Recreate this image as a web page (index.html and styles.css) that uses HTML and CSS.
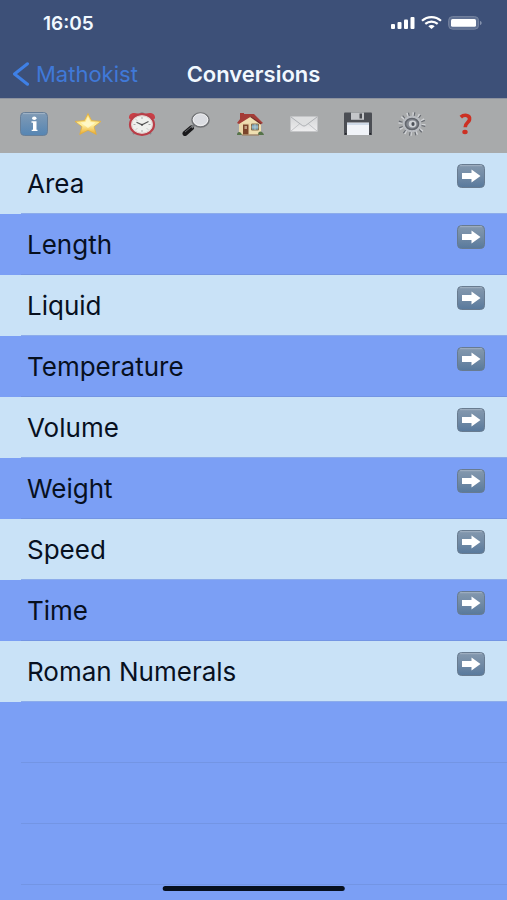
FILE: index.html
```html
<!DOCTYPE html>
<html lang="en">
<head>
<meta charset="utf-8">
<meta name="viewport" content="width=device-width, initial-scale=1">
<title>Conversions</title>
<link rel="stylesheet" href="styles.css">
</head>
<body>
<svg class="defs" width="0" height="0" aria-hidden="true">
  <defs>
    <linearGradient id="tile" x1="0" y1="0" x2="0" y2="1"><stop offset="0" stop-color="#8599ae"/><stop offset=".5" stop-color="#728ba6"/><stop offset="1" stop-color="#58799c"/></linearGradient>
    <linearGradient id="tileBlue" x1="0" y1="0" x2="0" y2="1"><stop offset="0" stop-color="#819bb5"/><stop offset="1" stop-color="#5585b3"/></linearGradient>
    <linearGradient id="gold" x1="0" y1="0" x2="0" y2="1"><stop offset="0" stop-color="#f6cf58"/><stop offset=".55" stop-color="#fff0a0"/><stop offset="1" stop-color="#e9a628"/></linearGradient>
    <linearGradient id="paper" x1="0" y1="0" x2="0" y2="1"><stop offset="0" stop-color="#d4d5d7"/><stop offset="1" stop-color="#eeeeef"/></linearGradient>
    <symbol id="arrow" viewBox="0 0 28 24">
      <rect x=".5" y=".5" width="27" height="23" rx="4" fill="url(#tile)" stroke="#687b90"/>
      <path d="M3 1.700h22" stroke="#a9b8c7" stroke-width=".8"/>
      <path d="M5 9h9.500V5.400L23.500 12l-9 6.600V15H5z" fill="#fff"/>
    </symbol>
  </defs>
</svg>
<header class="header">
  <div class="status">
    <span>16:05</span>
    <svg class="status-icons" viewBox="0 0 91 14" fill="#fff" role="img" aria-label="Signal, Wi-Fi, battery">
      <rect x="0" y="8" width="4" height="5" rx="1"/><rect x="6.500" y="6" width="4" height="7" rx="1"/><rect x="13" y="3.500" width="4" height="9.500" rx="1"/><rect x="19.500" y="1" width="4" height="12" rx="1"/>
      <g fill="none" stroke="#fff" stroke-width="2.200"><path d="M31 4.800c5.500-4.900 13.500-4.900 19 0"/><path d="M34.300 7.900c3.600-3 8.800-3 12.400 0"/></g>
      <path d="M37.300 10.200c1.900-1.500 4.500-1.500 6.400 0L40.500 13z"/>
      <rect x="57.600" y=".6" width="30" height="12.600" rx="4" fill="#5f7092" stroke="#75839f"/><rect x="60" y="3" width="25" height="7.800" rx="1.500"/><path d="M89 5c2.200.6 2.200 3.400 0 4z" fill="#8592ae"/>
    </svg>
  </div>
  <div class="navbar">
    <a class="back" href="#"><svg viewBox="0 0 18 24" aria-hidden="true"><path d="M15.500 1.800 2.500 12l13 10.200" fill="none" stroke="#3f80e6" stroke-width="3" stroke-linecap="round" stroke-linejoin="round"/></svg>Mathokist</a>
    <h1>Conversions</h1>
  </div>
</header>
<nav class="toolbar" aria-label="Tools">
  <button aria-label="Information"><svg viewBox="0 0 28 24"><rect x=".5" y=".5" width="27" height="23" rx="4" fill="url(#tileBlue)" stroke="#687f98"/><path d="M3 1.600h22" stroke="#a9bccd" stroke-width=".8"/><ellipse cx="14.300" cy="6.300" rx="2.200" ry="1.800" fill="#fff"/><path d="M11.500 9.300h5v8.500h1v1.200h-5.800v-1.200h1.300v-7.100h-1.500z" fill="#fff"/></svg></button>
  <button aria-label="Favourites"><svg viewBox="0 0 28 24"><path d="m14 1.500 3.600 7.100 9.400.8-7 5.300 2.300 7.800-8.300-4.300-8.300 4.300L8 14.700 1 9.400l9.400-.8z" fill="url(#gold)" stroke="#e2ae3d" stroke-width=".8" stroke-linejoin="round"/><path d="m14 4 2.600 6 5 .6-5 3.300-2.600 2-2.600-2-5-3.300 5-.6z" fill="#fffbd5" opacity=".75"/></svg></button>
  <button aria-label="Alarm"><svg viewBox="0 0 28 24"><path d="m5 22 3-3m15 3-3-3" stroke="#86898c" stroke-width="2"/><path d="M1 6.500C.5 1 6 0 10 1.800L3 7.200zM27 6.500C27.500 1 22 0 18 1.800l7 5.400z" fill="#c93f46"/><path d="M12.500.5h3v2h-3z" fill="#747678"/><ellipse cx="14" cy="12.500" rx="12" ry="10.300" fill="#eff0ed" stroke="#b93e48" stroke-width="2.200"/><ellipse cx="14" cy="12.500" rx="10.300" ry="8.600" fill="none" stroke="#d9c5c2" stroke-width=".7"/><path d="M14 5v2m0 11v2M5.500 12.500h2m13 0h2M8 7.500l1 1m10 8 1 1M8 17.500l1-1" stroke="#999" stroke-width=".8"/><path d="m8.500 10.200 5.500 2.600 6.500-3.300" fill="none" stroke="#555" stroke-width="1.100"/><circle cx="14" cy="12.700" r="1" fill="#444"/></svg></button>
  <button aria-label="Search"><svg viewBox="0 0 28 24"><path d="m3 21.500 6.500-5.600" stroke="#19191b" stroke-width="5" stroke-linecap="round"/><path d="m3 20 6-5" stroke="#65666a" stroke-width="1"/><path d="m9.500 15.500 3-2.700" stroke="#77797c" stroke-width="2.500"/><ellipse cx="18.500" cy="8" rx="8.500" ry="7" fill="#dedfe3" stroke="#717376" stroke-width="1.500"/><ellipse cx="18.500" cy="7.600" rx="7.300" ry="5.800" fill="#dadce1" stroke="#f0f0f1" stroke-width="1"/></svg></button>
  <button aria-label="Home"><svg viewBox="0 0 28 24"><path d="M4 1h4v7H4z" fill="#a53b36"/><path d="M3 10 14 3l11 7v12.500H3z" fill="#efdfb1"/><path d="M3 11h11v11.500H3z" fill="#ead7a8"/><path d="M8 2h10l9 9-2 1-10-7.500L3 12l-2-1z" fill="#a43d38"/><path d="M14.500 4.500 25 12" stroke="#702c2a" stroke-width="1.200"/><path d="M7 12.500h5.500v10H7z" fill="#7b452b"/><path d="M8.500 14h2.500v3H8.500z" fill="#c3a183"/><path d="M15.500 12h7v6h-7z" fill="#7da5b7" stroke="#8a704d"/><path d="M19 12v6M15.500 15h7" stroke="#c4d6da" stroke-width=".7"/><path d="M1 23c0-4 4-4 5 0zm21 0c0-5 5-4 6 0z" fill="#557349"/><path d="M6 23h17" stroke="#9c7755"/></svg></button>
  <button aria-label="Mail"><svg viewBox="0 0 28 24"><rect x=".5" y="4.500" width="27" height="15" rx=".7" fill="url(#paper)" stroke="#c4c5c7"/><path d="m1 19 9-7.500M27 19l-9-7.500" stroke="#c2c4c7"/><path d="m1 5 11.300 8.500q1.700 1.200 3.400 0L27 5" fill="#dedfe0" stroke="#adb0b4"/></svg></button>
  <button aria-label="Save"><svg viewBox="0 0 28 24"><path d="M1 .5h26q1 0 1 1V23H0V1.500q0-1 1-1z" fill="#4b4e54"/><path d="M7 .5h13v7.300H7z" fill="#c4c6c9"/><path d="M15.500 1.500H18v5h-2.500z" fill="#484a4f"/><path d="M3 10.500h22V23H3z" fill="#f0f3f8"/><path d="M3 11h22v2H3z" fill="#cfdae8"/><path d="M1 21h1.500v1.500H1zm24.500 0H27v1.500h-1.500z" fill="#222429"/></svg></button>
  <button aria-label="Settings"><svg viewBox="0 0 28 24"><ellipse cx="14" cy="12" rx="11.600" ry="9.900" fill="none" stroke="#d0d2d5" stroke-width="3.800" stroke-dasharray="1.700 3.950"/><ellipse cx="14" cy="12" rx="11.600" ry="9.900" fill="none" stroke="#666a71" stroke-width="3.800" stroke-dasharray="1.100 4.550" stroke-dashoffset="-1.500"/><ellipse cx="14" cy="12" rx="8.300" ry="7.200" fill="#777b82" stroke="#b9bcc1" stroke-width="2.200"/><ellipse cx="14" cy="12" rx="6.500" ry="5.500" fill="#858991" stroke="#63676e" stroke-width="1.500"/><ellipse cx="14.500" cy="12" rx="3.800" ry="3.400" fill="#d0d3d7"/><ellipse cx="15" cy="12" rx="1.600" ry="1.900" fill="#4b5058"/></svg></button>
  <button aria-label="Help"><svg viewBox="0 0 28 24"><path d="M8.800 5.200C12 2.300 18.300 2.500 17.500 7.600c-.5 3-4.200 3.300-4.300 7.600" fill="none" stroke="#cc3023" stroke-width="3.600"/><ellipse cx="13" cy="20" rx="2.700" ry="2.200" fill="#cc3023"/></svg></button>
</nav>
<main class="content">
  <ul class="list">
    <li><a href="#">Area<svg><use href="#arrow"/></svg></a></li>
    <li><a href="#">Length<svg><use href="#arrow"/></svg></a></li>
    <li><a href="#">Liquid<svg><use href="#arrow"/></svg></a></li>
    <li><a href="#">Temperature<svg><use href="#arrow"/></svg></a></li>
    <li><a href="#">Volume<svg><use href="#arrow"/></svg></a></li>
    <li><a href="#">Weight<svg><use href="#arrow"/></svg></a></li>
    <li><a href="#">Speed<svg><use href="#arrow"/></svg></a></li>
    <li><a href="#">Time<svg><use href="#arrow"/></svg></a></li>
    <li><a href="#">Roman Numerals<svg><use href="#arrow"/></svg></a></li>
  </ul>
  <div class="blank"></div>
  <div class="blank"></div>
  <div class="blank"></div>
</main>
<div class="home-indicator"></div>
</body>
</html>
```
FILE: styles.css
```css
* { box-sizing: border-box; }

body {
  margin: 0;
  min-height: 100vh;
  overflow-x: hidden;
  background: #7b9ff5;
  color: #07101f;
  font-family: Inter, "Liberation Sans", sans-serif;
}

svg { display: block; }
a { color: inherit; text-decoration: none; }
.defs { position: absolute; }

.header {
  background: #3d5078;
  color: #f1f8ff;
}

.status {
  display: flex;
  justify-content: space-between;
  align-items: center;
  height: 46px;
  padding: 0 25px 0 43px;
  font-size: 19px;
  font-weight: 600;
}

.status-icons {
  width: 91px;
  height: 14px;
}

.navbar {
  display: grid;
  grid-template-columns: 1fr auto 1fr;
  align-items: center;
  height: 52px;
  padding: 4px 12px 0;
  line-height: 24px;
}

.back {
  display: flex;
  align-items: center;
  gap: 6px;
  color: #4079d8;
  font-size: 22px;
}

.back svg {
  width: 18px;
  height: 24px;
}

h1 {
  margin: 0;
  font-size: 22px;
  font-weight: 600;
}

.toolbar {
  display: flex;
  height: 55px;
  padding: 0 14px 0 7px;
  background: #a8aaab;
  border-top: 1px solid #8e939f;
}

.toolbar button {
  display: flex;
  flex: 1;
  align-items: center;
  justify-content: center;
  padding: 0 0 4px;
  border: 0;
  background: none;
}

.toolbar svg {
  width: 28px;
  height: 24px;
}

.list {
  margin: 0;
  padding: 0;
  list-style: none;
}

.list a {
  display: flex;
  justify-content: space-between;
  height: 61px;
  padding: 0 22px 0 27px;
  font-size: 26px;
  line-height: 62px;
}

.list li,
.blank {
  background-image: linear-gradient(#7395e4, #7395e4);
  background-position: 21px 100%;
  background-repeat: no-repeat;
  background-size: 100% 1px;
}

.list li:nth-child(odd) {
  background-color: #c9e2f7;
  background-image: linear-gradient(#8caceb, #8caceb);
}

.list svg {
  width: 28px;
  height: 24px;
  margin-top: 11px;
}

.blank { height: 61px; }

.home-indicator {
  position: fixed;
  bottom: 9px;
  left: 50%;
  width: 36%;
  height: 5px;
  border-radius: 3px;
  background: #07101f;
  transform: translateX(-50%);
}
```
